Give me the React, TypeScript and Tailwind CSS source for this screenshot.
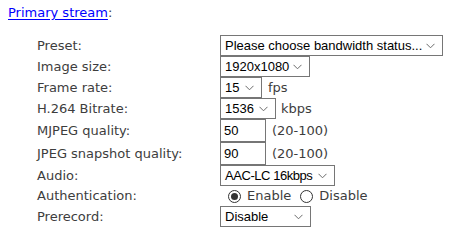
import React from "react";

const Chevron = () => (
  <svg width="9" height="6" viewBox="0 0 9 6" className="shrink-0">
    <path d="M0.5 0.8 L4.5 4.8 L8.5 0.8" fill="none" stroke="#6b6b6b" strokeWidth="1" />
  </svg>
);

function Select({ value, width, tight }: { value: string; width: string; tight?: boolean }) {
  return (
    <div
      className={`flex h-[21px] items-center justify-between border border-[#767676] bg-white pl-[4px] pr-[7px] text-[13px] text-black ${width}`}
      style={{ fontFamily: '"Liberation Sans", Arial, sans-serif' }}
    >
      <span className={`whitespace-nowrap ${tight ? "tracking-[-0.45px]" : ""}`}>{value}</span>
      <Chevron />
    </div>
  );
}

function Input({ value }: { value: string }) {
  return (
    <div
      className="flex h-[23px] w-[46px] items-center border border-[#767676] bg-white pl-[3px] text-[13px] text-black"
      style={{ fontFamily: '"Liberation Sans", Arial, sans-serif' }}
    >
      {value}
    </div>
  );
}

function Radio({ checked }: { checked: boolean }) {
  return (
    <span className="flex h-[13px] w-[13px] items-center justify-center rounded-full border border-[#333] bg-white">
      {checked && <span className="h-[7px] w-[7px] rounded-full bg-[#333]" />}
    </span>
  );
}

function Row({ label, h, children }: { label: string; h: string; children: React.ReactNode }) {
  return (
    <div className={`flex items-center ${h}`}>
      <div className="w-[183px] shrink-0 whitespace-nowrap">{label}</div>
      <div className="flex items-center">{children}</div>
    </div>
  );
}

export default function App() {
  return (
    <div
      className="h-[238px] w-[449px] bg-white text-[13px] text-[#3d3d3d]"
      style={{ fontFamily: '"DejaVu Sans", Verdana, sans-serif' }}
    >
      <div className="pl-[8px] pt-[5px] leading-[16px]">
        <a className="text-[#0000ff] underline underline-offset-[2px]">Primary stream</a>
        <span>:</span>
      </div>
      <div className="mt-[14px] flex flex-col pl-[37px]">
        <Row label="Preset:" h="h-[21px]">
          <Select value="Please choose bandwidth status..." width="w-[223px]" />
        </Row>
        <Row label="Image size:" h="h-[21px]">
          <Select value="1920x1080" width="w-[90px]" />
        </Row>
        <Row label="Frame rate:" h="h-[21px]">
          <Select value="15" width="w-[42px]" />
          <span className="ml-[6px]">fps</span>
        </Row>
        <Row label="H.264 Bitrate:" h="h-[21px]">
          <Select value="1536" width="w-[56px]" />
          <span className="ml-[5px]">kbps</span>
        </Row>
        <Row label="MJPEG quality:" h="h-[23px]">
          <Input value="50" />
          <span className="ml-[6px]">(20-100)</span>
        </Row>
        <Row label="JPEG snapshot quality:" h="h-[23px]">
          <Input value="90" />
          <span className="ml-[6px]">(20-100)</span>
        </Row>
        <Row label="Audio:" h="h-[21px]">
          <Select value="AAC-LC 16kbps" width="w-[115px]" tight />
        </Row>
        <Row label="Authentication:" h="h-[20px]">
          <div className="ml-[8px] flex items-center">
            <Radio checked />
            <span className="ml-[6px]">Enable</span>
            <span className="ml-[9px]">
              <Radio checked={false} />
            </span>
            <span className="ml-[6px]">Disable</span>
          </div>
        </Row>
        <Row label="Prerecord:" h="h-[21px]">
          <Select value="Disable" width="w-[91px]" />
        </Row>
      </div>
    </div>
  );
}
